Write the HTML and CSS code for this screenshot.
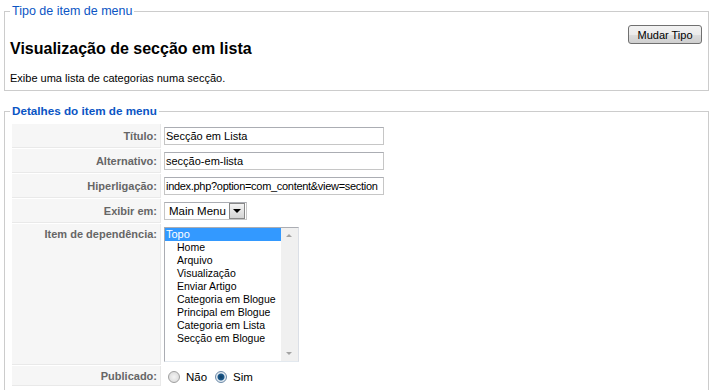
FILE: index.html
```html
<!DOCTYPE html>
<html lang="pt">
<head>
  <meta charset="UTF-8" />
  <title>Item de menu</title>
  <link rel="stylesheet" href="styles.css">
</head>
<body>
  <fieldset class="box">
    <legend>Tipo de item de menu</legend>
    <button class="btn" type="button">Mudar Tipo</button>
    <h2 class="type-title">Visualização de secção em lista</h2>
    <p class="type-desc">Exibe uma lista de categorias numa secção.</p>
  </fieldset>

  <fieldset class="box details">
    <legend>Detalhes do item de menu</legend>
    <table class="admintable">
      <tr>
        <td class="key">Título:</td>
        <td><div class="input">Secção em Lista</div></td>
      </tr>
      <tr>
        <td class="key">Alternativo:</td>
        <td><div class="input">secção-em-lista</div></td>
      </tr>
      <tr>
        <td class="key">Hiperligação:</td>
        <td><div class="input url">index.php?option=com_content&amp;view=section</div></td>
      </tr>
      <tr>
        <td class="key">Exibir em:</td>
        <td>
          <div class="dropdown">
            <span>Main Menu</span>
            <span class="drop-btn"><span class="tri"></span></span>
          </div>
        </td>
      </tr>
      <tr>
        <td class="key top">Item de dependência:</td>
        <td>
          <div class="listbox">
            <div class="options">
              <div class="opt selected">Topo</div>
              <div class="opt sub">Home</div>
              <div class="opt sub">Arquivo</div>
              <div class="opt sub">Visualização</div>
              <div class="opt sub">Enviar Artigo</div>
              <div class="opt sub">Categoria em Blogue</div>
              <div class="opt sub">Principal em Blogue</div>
              <div class="opt sub">Categoria em Lista</div>
              <div class="opt sub">Secção em Blogue</div>
            </div>
            <div class="scrollbar">
              <span class="arrow up"></span>
              <span class="arrow down"></span>
            </div>
          </div>
        </td>
      </tr>
      <tr>
        <td class="key">Publicado:</td>
        <td>
          <div class="radios">
            <span class="radio"></span><span>Não</span>
            <span class="radio checked"></span><span>Sim</span>
          </div>
        </td>
      </tr>
    </table>
  </fieldset>
</body>
</html>
```

FILE: styles.css
```css
body {
  margin: 0;
  padding: 4px 5px 0 4px;
  font-family: "Liberation Sans", Arial, sans-serif;
  font-size: 11px;
  color: #333;
  background: #fff;
}
.box {
  margin: 0;
  padding: 0 5px 5px 5px;
  border: 1px solid #ccc;
}
.box legend {
  padding: 0 2px;
  margin-left: 0;
  color: #0b55c4;
  font-size: 12.5px;
  line-height: 14px;
}
.details {
  margin-top: 13px;
  padding: 5px 7px 12px 5px;
}
.details legend {
  font-weight: bold;
  font-size: 11.7px;
}
.btn {
  float: right;
  margin: 7px 1px 0 0;
  width: 74px;
  height: 19px;
  padding: 0;
  font-family: "Liberation Sans", Arial, sans-serif;
  font-size: 11px;
  color: #000;
  border: 1px solid #707070;
  border-radius: 3px;
  background: linear-gradient(#f2f2f2, #ebebeb 50%, #dddddd 51%, #cfcfcf);
}
.type-title {
  margin: 21px 0 0 0;
  font-size: 16px;
  line-height: 20px;
  color: #000;
}
.type-desc {
  margin: 12px 0 0 0;
  line-height: 14px;
  color: #000;
}
.admintable {
  border-spacing: 1px;
  border-collapse: separate;
  margin-left: 1px;
}
.admintable td {
  padding: 3px 2px;
  vertical-align: middle;
}
.admintable td.key {
  width: 143px;
  padding-right: 3px;
  text-align: right;
  font-weight: bold;
  color: #666;
  background: #f6f6f6;
  border-bottom: 1px solid #e9e9e9;
  border-right: 1px solid #e9e9e9;
}
.admintable td.top {
  vertical-align: top;
  padding-top: 4px;
}
.input {
  width: 216px;
  height: 16px;
  padding: 0 1px;
  border: 1px solid #c6c6c6;
  border-top-color: #abadb3;
  line-height: 16px;
  color: #000;
  white-space: nowrap;
  overflow: hidden;
}
.input.url {
  letter-spacing: -0.3px;
}
.dropdown {
  display: inline-flex;
  align-items: center;
  height: 16px;
  padding-left: 4px;
  border: 1px solid #c6c6c6;
  border-top-color: #abadb3;
  font-size: 11.5px;
  color: #000;
  gap: 3px;
}
.drop-btn {
  display: flex;
  align-items: center;
  justify-content: center;
  width: 14px;
  height: 14px;
  margin-right: 1px;
  border: 1px solid #888;
  background: linear-gradient(#f4f4f4, #d4d4d4);
}
.tri {
  width: 0;
  height: 0;
  border-left: 4px solid transparent;
  border-right: 4px solid transparent;
  border-top: 4px solid #000;
}
.listbox {
  display: flex;
  width: 133px;
  height: 133px;
  border: 1px solid #abadb3;
  border-right-color: #dbdfe6;
  border-bottom-color: #e3e9ef;
}
.options {
  flex: 1;
  font-size: 10.5px;
  color: #000;
}
.opt {
  height: 13px;
  line-height: 13px;
  padding-left: 1px;
  white-space: nowrap;
}
.opt.sub {
  padding-left: 12px;
}
.opt.selected {
  background: #3399ff;
  color: #fff;
  font-size: 11px;
}
.scrollbar {
  position: relative;
  width: 17px;
  background: #f0f0f0;
}
.arrow {
  position: absolute;
  left: 5px;
  width: 0;
  height: 0;
  border-left: 3px solid transparent;
  border-right: 3px solid transparent;
}
.arrow.up {
  top: 6px;
  border-bottom: 3px solid #a3a3a3;
}
.arrow.down {
  bottom: 6px;
  border-top: 3px solid #a3a3a3;
}
.radios {
  display: flex;
  align-items: center;
  gap: 6px;
  padding: 2px 0 0 4px;
  font-size: 11.5px;
  color: #000;
}
.radio {
  width: 10px;
  height: 10px;
  border: 1px solid #a0a0a0;
  border-radius: 50%;
  background: radial-gradient(#f4f4f4, #d6d6d6);
}
.radio.checked {
  border-color: #6c8aa8;
  background: radial-gradient(circle, #0f3d63 0, #1c5a8c 3px, #e8eef4 4px, #c8d4e0 100%);
  margin-left: 2px;
}
```
